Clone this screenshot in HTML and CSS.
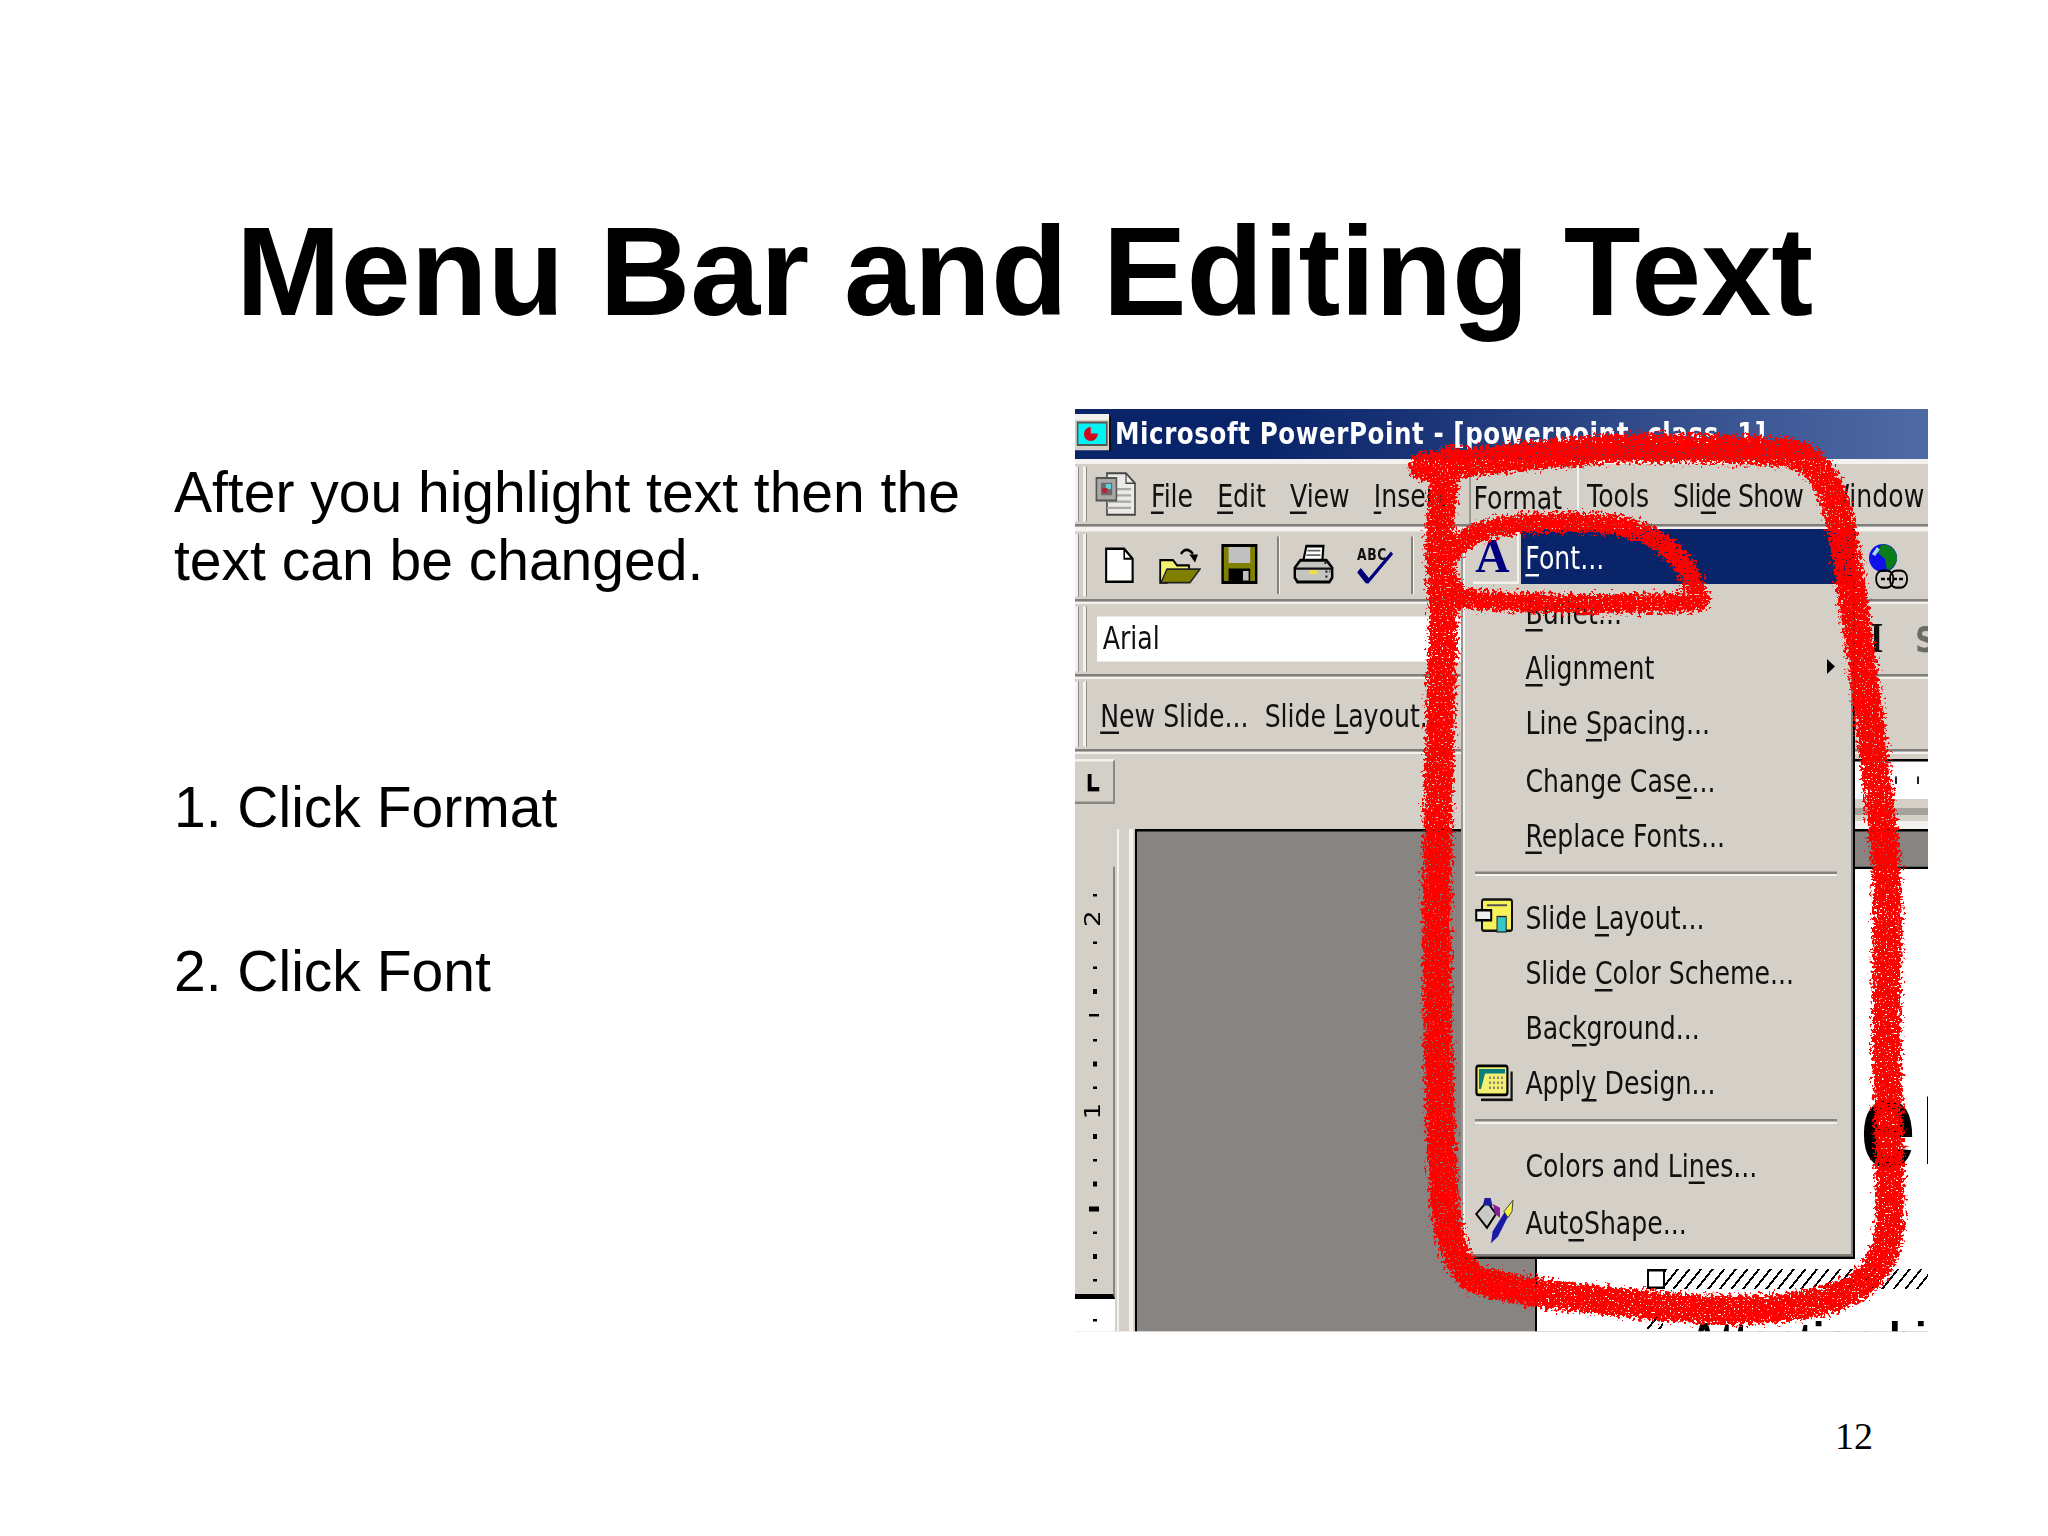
FILE: index.html
```html
<!DOCTYPE html>
<html lang="en">
<head>
<meta charset="utf-8">
<title>Menu Bar and Editing Text</title>
<link rel="stylesheet" href="styles.css">
</head>
<body>
<div class="page">
  <h1 class="title">Menu Bar and Editing Text</h1>
  <div class="content">
    <div class="copy">
      <p class="lead">After you highlight text then the<br>text can be changed.</p>
      <p class="step one">1. Click Format</p>
      <p class="step two">2. Click Font</p>
    </div>
    <div class="shot">
      <div class="native">
        <div class="titlebar">
          <svg class="app-ico" viewBox="0 0 18 15"><rect x="0" y="0" width="17" height="14.5" fill="#d4d0c8"/><rect x="17" y="1" width="1" height="14" fill="#111"/><rect x="0" y="0" width="17" height="2.4" fill="#f2f0ec"/><rect x="1.3" y="3.4" width="14.6" height="9" fill="#00f4f4" stroke="#555" stroke-width=".8"/><path d="M4.5 7.8 a3.4 2.6 0 0 1 3.4-2.6 v2.6h3.6 a3.6 3 0 0 1-3.6 3 a3.4 2.6 0 0 1-3.4-3z" fill="#d00a1e"/></svg>
          <span class="win-title">Microsoft PowerPoint - [powerpoint&nbsp; class&nbsp; 1]</span>
        </div>

        <div class="bar menubar">
          <i class="grip"></i>
          <svg class="doc-ico" viewBox="0 0 21 18"><path d="M6 .7h9.5l4.5 4v12.6H6z" fill="#eceae6" stroke="#444" stroke-width=".8"/><path d="M15.5 .7v4h4.5" fill="none" stroke="#444" stroke-width=".6"/><path d="M11 7h7M11 9.5h7M6 12h12M6 14.500h12" stroke="#a8a8a4" stroke-width=".9"/><rect x=".7" y="2.6" width="10" height="9" fill="#aaa8a4" stroke="#555" stroke-width=".8"/><rect x="3" y="4.500" width="5.600" height="5" fill="#6a6a70"/><rect x="5.400" y="5" width="2.600" height="2" fill="#5fd0d8"/><rect x="3.600" y="6.600" width="2.500" height="2" fill="#b32435"/></svg>
          <span class="mi mi-file"><u>F</u>ile</span>
          <span class="mi"><u>E</u>dit</span>
          <span class="mi"><u>V</u>iew</span>
          <span class="mi"><u>I</u>nsert</span>
          <span class="mi mi-format">Format</span>
          <span class="mi">Tools</span>
          <span class="mi mi-show">Sli<u>d</u>e Show</span>
          <span class="mi mi-window">Window</span>
        </div>

        <div class="bar toolbar">
          <i class="grip"></i>
          <span class="btn"><svg class="ico-new" viewBox="0 0 15 15"><path d="M.6.6H10L14.400 4.800V14.400H.6z" fill="#fff" stroke="#000" stroke-width="1.100"/><path d="M10 .6V4.800H14.400" fill="none" stroke="#000" stroke-width=".8"/></svg></span>
          <span class="btn"><svg class="ico-open" viewBox="0 0 21 15"><path d="M.6 5.400H7L9 7.500H15V9.500L4 14.400H.6z" fill="#f4f070" stroke="#000" stroke-width=".9"/><path d="M4 9H20.500L15.500 14.400H1z" fill="#808000" stroke="#222" stroke-width=".7"/><path d="M11 3 C12.500 .8 15 .8 17 3" fill="none" stroke="#000" stroke-width="1.100"/><path d="M15.200 3.200H19.500L18 6.400z" fill="#000"/></svg></span>
          <span class="btn"><svg class="ico-save" viewBox="0 0 18 16"><rect x=".6" y=".6" width="16.800" height="14.800" fill="#808000" stroke="#000" stroke-width="1.200"/><rect x="3.600" y="1.200" width="10.800" height="6.400" fill="#c0c0c0"/><rect x="3.600" y="9.800" width="10.800" height="5.500" fill="#000"/><rect x="10.800" y="10.800" width="2.800" height="3.800" fill="#c0c0c0"/></svg></span>
          <i class="tsep"></i>
          <span class="btn"><svg class="ico-print" viewBox="0 0 20 16"><path d="M5 6.500 L6.500 .8H15L14.500 6.500z" fill="#fff" stroke="#000" stroke-width="1.100"/><path d="M7 2.600H13.500M6.500 4.400H13.500" stroke="#666" stroke-width=".7"/><path d="M3.500 6.500H16.500L19.400 9.500V13.500L18 15.200H2L.7 13.500V9.500z" fill="#c4c4c0" stroke="#000" stroke-width="1.200"/><path d="M.9 9.800H19.100" stroke="#111" stroke-width=".9"/><path d="M15.500 7.500h2.500M16 11h2.500M16 13h2" stroke="#222" stroke-width=".9" stroke-dasharray="1 1"/><rect x="8" y="10.500" width="3.800" height="1.600" fill="#f0e040"/></svg></span>
          <span class="btn spell"><svg class="ico-abc" viewBox="0 0 18 17"><text x="0" y="6.500" class="abc">ABC</text><path d="M1 10.500 L5.500 15 L17.500 3.500" fill="none" stroke="#00007a" stroke-width="1.500"/><path d="M1 10.500 L5.500 15" fill="none" stroke="#00007a" stroke-width="2.600"/></svg></span>
          <i class="tsep"></i>
          <svg class="ico-globe" viewBox="0 0 20 18"><ellipse cx="7" cy="5.600" rx="7" ry="5.600" fill="#1010e8"/><path d="M6 .3 C10 -.4 14 2.500 14 5.600 C14 8 11.500 9.800 9 10.600 L8 6 L4.500 3.500z" fill="#0a7d18"/><path d="M1.500 4 L4 1.200 L5.400 2.200 L3 4.800z" fill="#a8d8f0"/><rect x="3.600" y="10.600" width="8.500" height="6.800" rx="3" fill="none" stroke="#000" stroke-width=".9"/><rect x="10.500" y="10.600" width="8.500" height="6.800" rx="3" fill="none" stroke="#000" stroke-width=".9"/><path d="M6 14H17" stroke="#000" stroke-width="1" stroke-dasharray="2 1"/></svg>
        </div>

        <div class="bar formatbar">
          <i class="grip"></i>
          <span class="combo">Arial</span>
          <span class="fmt-i">I</span>
          <span class="fmt-s">S</span>
        </div>

        <div class="bar slidebar">
          <i class="grip"></i>
          <span class="task"><u>N</u>ew Slide...</span>
          <span class="task">Slide <u>L</u>ayout...</span>
        </div>

        <div class="hruler-row">
          <span class="tab-box"><svg viewBox="0 0 8 8"><path d="M1.500 0V7H7" fill="none" stroke="#000" stroke-width="2.200"/></svg></span>
          <div class="hruler-side">
            <div class="hruler"><i></i><i></i></div>
            <div class="hslide"></div>
          </div>
        </div>

        <div class="area">
          <div class="vcol">
            <div class="vruler">
              <i></i><b>2</b><i></i><i></i><i></i><i class="dash"></i><i></i><i></i><i></i><b>1</b><i></i><i></i><i></i><i class="dash"></i><i></i><i></i><i></i>
            </div>
            <div class="vtail"><i></i></div>
          </div>
          <div class="workspace">
            <div class="slide">
              <span class="big-e">e</span>
              <i class="caret"></i>
              <i class="handle"></i>
              <i class="hatch"></i>
              <i class="hatch-low"></i>
              <span class="slide-text">Attention bi</span>
            </div>
          </div>
        </div>

        <div class="popup">
          <div class="row active"><span class="mico mico-a"><span class="glyph-a">A</span></span><span class="lbl"><u>F</u>ont...</span></div>
          <div class="row"><span class="mico"></span><span class="lbl"><u>B</u>ullet...</span></div>
          <div class="row"><span class="mico"></span><span class="lbl"><u>A</u>lignment</span><i class="arrow"></i></div>
          <div class="row"><span class="mico"></span><span class="lbl">Line <u>S</u>pacing...</span></div>
          <div class="row"><span class="mico"></span><span class="lbl">Change Cas<u>e</u>...</span></div>
          <div class="row"><span class="mico"></span><span class="lbl"><u>R</u>eplace Fonts...</span></div>
          <div class="sep"></div>
          <div class="row"><span class="mico"><svg viewBox="0 0 19 14"><rect x="3.500" y=".7" width="15" height="12.500" rx="1" fill="#f5f25a" stroke="#111" stroke-width="1"/><path d="M6 3H16" stroke="#555" stroke-width=".8"/><rect x=".6" y="5" width="7.500" height="4" fill="#eee" stroke="#000" stroke-width="1"/><rect x="11" y="7.500" width="4.600" height="6.200" fill="#35c6c8" stroke="#222" stroke-width=".5"/></svg></span><span class="lbl">Slide <u>L</u>ayout...</span></div>
          <div class="row"><span class="mico"></span><span class="lbl">Slide <u>C</u>olor Scheme...</span></div>
          <div class="row"><span class="mico"></span><span class="lbl">Bac<u>k</u>ground...</span></div>
          <div class="row"><span class="mico"><svg viewBox="0 0 19 15"><path d="M3 14.300H18.300V3" fill="none" stroke="#111" stroke-width="1.100"/><rect x=".7" y=".7" width="15.500" height="11.600" rx="1" fill="#f3ef70" stroke="#000" stroke-width="1.100"/><path d="M2 2H15V3.800H5L3 10H2z" fill="#0a7d80"/><path d="M7 5.500h7M7 7.500h7M7 9.500h7" stroke="#8a8a70" stroke-width="1" stroke-dasharray="1 1"/></svg></span><span class="lbl">Appl<u>y</u> Design...</span></div>
          <div class="sep"></div>
          <div class="row"><span class="mico"></span><span class="lbl">Colors and Li<u>n</u>es...</span></div>
          <div class="row"><span class="mico"><svg class="ico-shape" viewBox="0 0 20 19"><path d="M.6 7 L6 2 L10.500 7 L6 12.500z" fill="#c9c9c5" stroke="#000" stroke-width=".9"/><path d="M4 3.500 L4.800 .6 L7.800 .6 L8.800 3.800z" fill="#1c1c9c"/><path d="M9 3 L12.500 4.500 L12.500 8.500 L10 7z" fill="#8a1c9c"/><path d="M8 18.700 L8.800 14 L15 6 L17.500 6.500 L11.500 16z" fill="#1a1aa8"/><path d="M14.500 6 L19 1.500 L18.500 6 L16.500 8.500z" fill="#f4f040" stroke="#333" stroke-width=".4"/></svg></span><span class="lbl">Aut<u>o</u>Shape...</span></div>
        </div>
      </div>

      <svg class="marker" viewBox="823 313 653 706" preserveAspectRatio="none">
        <defs>
          <filter id="rough" x="-8%" y="-8%" width="116%" height="116%">
            <feTurbulence type="fractalNoise" baseFrequency=".42" numOctaves="2" seed="4" result="noise"/>
            <feDisplacementMap in="SourceGraphic" in2="noise" scale="13" xChannelSelector="R" yChannelSelector="G" result="rough"/>
            <feTurbulence type="fractalNoise" baseFrequency=".75" numOctaves="1" seed="11" result="grain"/>
            <feColorMatrix in="grain" type="matrix" values="0 0 0 0 1  0 0 0 0 1  0 0 0 0 1  16 0 0 0 -10.400" result="speck"/>
            <feComposite in="rough" in2="speck" operator="out"/>
          </filter>
        </defs>
        <g class="ink" filter="url(#rough)">
          <path class="ink-outer" d="M1090 357 C1130 354 1190 346 1240 343 C1290 342 1340 344 1372 347 C1392 352 1402 372 1408 395 C1415 430 1420 470 1426 510 C1432 560 1437 600 1442 640 C1447 690 1444 740 1444 790 C1445 840 1447 880 1447 925 C1447 950 1442 968 1425 982 C1405 997 1370 1002 1330 1002 C1290 1002 1250 997 1210 993 C1180 990 1150 985 1128 978 C1115 968 1110 950 1106 920 C1102 860 1100 780 1100 700 C1100 620 1103 540 1105 470 C1103 440 1101 420 1103 395 C1105 375 1106 365 1110 352"/>
          <path class="ink-inner" d="M1110 425 C1120 402 1170 397 1233 401 C1268 406 1288 425 1297 448 L1302 460 C1250 463 1170 463 1118 458 L1106 440"/>
        </g>
      </svg>
    </div>
  </div>
  <div class="foot"><span class="num">12</span></div>
</div>
</body>
</html>
```

FILE: styles.css
```css
html, body { margin: 0; padding: 0; background: #fff; }
.page {
  width: 2048px; height: 1536px; display: flex; flex-direction: column;
  font-family: "Liberation Sans", Arial, sans-serif; color: #000; overflow: hidden;
}
.title {
  margin: 0; padding: 200px 0 0 236px; height: 409px; box-sizing: border-box;
  font-size: 125.8px; line-height: 144px; font-weight: 700; white-space: nowrap;
}
.content { display: flex; align-items: flex-start; }
.copy { width: 1075px; box-sizing: border-box; padding-left: 174px; font-size: 57px; line-height: 68px; }
.copy p { margin: 0; }
.lead { padding-top: 49px; }
.step.one { padding-top: 179px; }
.step.two { padding-top: 96px; }
.foot { margin-top: auto; padding: 0 175px 78px 0; text-align: right; }
.num { font-family: "Liberation Serif", "Times New Roman", serif; font-size: 38px; line-height: 44px; }

.shot { position: relative; width: 853px; height: 923px; overflow: hidden; flex: none; }
.native {
  position: relative; width: 426.5px; height: 369.2px; display: flex; flex-direction: column;
  transform: scale(2, 2.5); transform-origin: 0 0; filter: blur(.22px);
  background: #f4f2ee; overflow: hidden;
  font-family: "DejaVu Sans", Verdana, sans-serif; font-size: 12.6px; letter-spacing: 0; color: #111;
}
.native u { text-underline-offset: 1.5px; text-decoration-thickness: 1px; }
.marker { position: absolute; inset: 0; width: 853px; height: 923px; pointer-events: none; }
.ink path { fill: none; stroke: #ff0000; stroke-linecap: round; stroke-linejoin: round; }
.ink-outer { stroke-width: 22; }
.ink-inner { stroke-width: 15; }

.titlebar {
  height: 19.6px; flex: none; display: flex; align-items: center;
  background: linear-gradient(90deg, #0a246a 0, #0a246a 22%, #2b4684 60%, #4f6ba6 100%);
  margin-bottom: 2px;
}
.app-ico { width: 18px; height: 15px; flex: none; margin-right: 2px; }
.win-title { color: #fff; font-family: "DejaVu Sans", sans-serif; font-weight: 700; font-size: 12.3px; letter-spacing: .28px; white-space: nowrap; }

.bar { flex: none; display: flex; align-items: center; background: #d4d0c8; border-bottom: 1px solid #807e7a; margin-bottom: 1.4px; height: 27.4px; box-sizing: content-box; white-space: nowrap; overflow: hidden; }
.grip { flex: none; width: 7.6px; align-self: stretch; margin: 1px 0; background: repeating-linear-gradient(90deg, #f4f2ee 0 1.4px, #8f8c87 1.4px 2.2px, #d4d0c8 2.2px 4px); }
.menubar { height: 24.8px; margin-bottom: 1.2px; }
.doc-ico { flex: none; width: 21px; height: 18px; margin: 0 7px 0 2.400px; }
.mi { flex: none; margin-right: 12px; padding-top: 2px; }
.mi-format { align-self: stretch; display: flex; align-items: center; box-sizing: border-box; width: 55px; margin: 0 4.500px 0 -1px; padding: 2px 0 0 1.700px; border-left: 1px solid #9a9792; border-top: 1px solid #9a9792; border-right: 1px solid #f4f2ee; }
.mi-show { letter-spacing: -.38px; margin-right: 11px; }
.mi-window { margin-right: 0; }

.btn { flex: none; width: 30px; display: flex; justify-content: center; align-items: center; }
.ico-new { width: 14.400px; height: 15px; }
.ico-open { width: 21px; height: 15px; }
.ico-save { width: 18.400px; height: 16px; }
.ico-print { width: 20.400px; height: 16px; }
.ico-abc { width: 18px; height: 17px; }
.abc { font-family: "DejaVu Sans", sans-serif; font-weight: 700; font-size: 6.200px; letter-spacing: .3px; fill: #111; }
.tsep { flex: none; width: 7px; align-self: stretch; margin: 2px 0; background: linear-gradient(90deg, transparent 0 3px, #85827d 3px 4px, #f4f2ee 4px 4.600px, transparent 4.600px); }
.ico-globe { flex: none; width: 20px; height: 18px; margin: 2px 0 0 225px; }

.combo { flex: none; width: 190px; height: 17.200px; margin-left: 3.900px; padding-left: 2.400px; box-sizing: border-box; background: #fff; line-height: 17.200px; }
.fmt-i { flex: none; margin-left: 196px; font-family: "Liberation Serif", serif; font-weight: 700; font-size: 17px; }
.fmt-s { flex: none; margin-left: 16px; color: #6d6b68; font-weight: 700; font-size: 14px; }
.task { flex: none; margin-right: 8px; padding-top: 2px; }
.slidebar .task:first-of-type { margin-left: 5px; }

.hruler-row { flex: none; height: 30.400px; display: flex; background: #d4d0c8; }
.tab-box { flex: none; box-sizing: border-box; width: 20px; height: 18px; margin-top: 2.400px; display: flex; align-items: center; justify-content: center; background: #d4d0c8; border-right: 1px solid #8a8782; border-bottom: 1px solid #8a8782; border-top: 1px solid #f4f2ee; }
.tab-box svg { width: 7px; height: 7px; }
.hruler-side { flex: 1; margin-left: 270px; display: flex; flex-direction: column; }
.hruler { height: 15.400px; margin-top: 2.400px; background: #fff; border-top: 1.500px solid #000; display: flex; gap: 10px; align-items: center; justify-content: flex-end; padding-right: 5px; box-sizing: border-box; }
.hruler i { width: 1px; height: 2.500px; background: #222; }
.hslide { flex: 1; background: linear-gradient(#d4d0c8 0 30%, #a5a29d 30% 55%, #d4d0c8 55% 75%, #f4f2ee 75%); }

.area { flex: 1; min-height: 0; display: flex; background: #d4d0c8; }
.vcol { flex: none; width: 30px; box-sizing: border-box; padding-top: 14.800px; display: flex; flex-direction: column; background: linear-gradient(90deg, transparent 0 21px, #f4f2ee 21px 22px, transparent 22px 27px, #f4f2ee 27px 29px, transparent 29px); }
.vruler { width: 20px; height: 173px; flex: none; box-sizing: border-box; padding-top: 6.500px; background: #d4d0c8; border-right: 1px solid #8a8782; border-bottom: 2px solid #000; display: flex; flex-direction: column; }
.vruler i, .vruler b { height: 9.650px; flex: none; display: flex; align-items: center; justify-content: center; position: relative; }
.vruler i::before { content: ""; width: 2px; height: 1.400px; background: #000; }
.vruler i.dash::before { width: 4.500px; height: 1.600px; }
.vruler b { font-weight: 400; font-size: 10.500px; letter-spacing: 0; transform: rotate(-90deg); line-height: 9.650px; color: #000; }
.vtail { flex: 1; width: 20px; background: #fff; display: flex; justify-content: center; padding-top: 7.500px; box-sizing: border-box; }
.vtail i { width: 2px; height: 1.400px; background: #000; }

.workspace { flex: 1; min-width: 0; box-sizing: border-box; padding: 13.400px 0 0 199px; background: #878482; border-top: 1px solid #000; border-left: 1px solid #000; display: flex; }
.slide { position: relative; flex: 1; background: #fff; border-top: 1px solid #000; border-left: 1px solid #000; overflow: hidden; }
.big-e { position: absolute; left: 161.500px; top: 73px; font: 700 50px/58px "Liberation Sans", Arial, sans-serif; letter-spacing: 0; color: #000; }
.caret { position: absolute; left: 194.500px; top: 91px; width: 1px; height: 27px; background: #000; }
.handle { position: absolute; left: 55px; top: 160.500px; width: 8.500px; height: 8px; box-sizing: border-box; background: #fff; border: 1px solid #000; }
.hatch { position: absolute; left: 64px; right: 0; top: 160.500px; height: 8px; background: repeating-linear-gradient(135deg, #000 0 .9px, transparent .9px 4.100px); }
.hatch-low { position: absolute; left: 55px; width: 8px; top: 172px; height: 12px; background: repeating-linear-gradient(135deg, #000 0 .9px, transparent .9px 4.100px); }
.slide-text { position: absolute; left: 76px; top: 176px; font: 700 21px/26px "Liberation Sans", Arial, sans-serif; letter-spacing: .2px; color: #000; white-space: nowrap; }

.popup { position: absolute; left: 194px; top: 47.800px; width: 196px; box-sizing: border-box; padding-left: 1.500px; background: #d4d0c8; border-left: 1px solid #f4f2ee; border-right: 1px solid #000; border-bottom: 1px solid #000; box-shadow: inset -1px -1px 0 #807e7a, -1px 0 0 #9a9792; display: flex; flex-direction: column; padding-bottom: 3.200px; }
.row { height: 22.150px; display: flex; align-items: center; flex: none; position: relative; }
.mico { flex: none; width: 26px; margin-right: 2.700px; display: flex; align-items: center; justify-content: center; }
.mico svg { width: 19px; height: 15px; }
.mico .ico-shape { width: 20px; height: 19px; }
.mico-a { align-self: stretch; width: 23.600px; margin: 0 0 0 2.400px; box-sizing: border-box; font: 700 19px/22px "Liberation Serif", serif; letter-spacing: 0; color: #00007f; border-right: 1px solid #f4f2ee; border-bottom: 1px solid #f4f2ee; border-top: 1px solid #8a8782; }
.glyph-a { display: inline-block; transform: translateX(-1.200px) scaleX(1.250); }
.lbl { padding-top: 1.200px; }
.active .lbl { color: #fff; padding: 2px 0 0 2.700px; }
.active { background: linear-gradient(90deg, transparent 0 26px, #0a246a 26px); }
.arrow { position: absolute; right: 9px; top: 7.500px; width: 0; height: 0; border-left: 4.500px solid #000; border-top: 3.800px solid transparent; border-bottom: 3.800px solid transparent; }
.sep { height: 11px; flex: none; box-sizing: border-box; padding-top: 4px; margin: 0 8px 0 3.500px; }
.sep::before { content: ""; display: block; height: 1px; background: #85827d; border-bottom: 1px solid #f4f2ee; }
```
